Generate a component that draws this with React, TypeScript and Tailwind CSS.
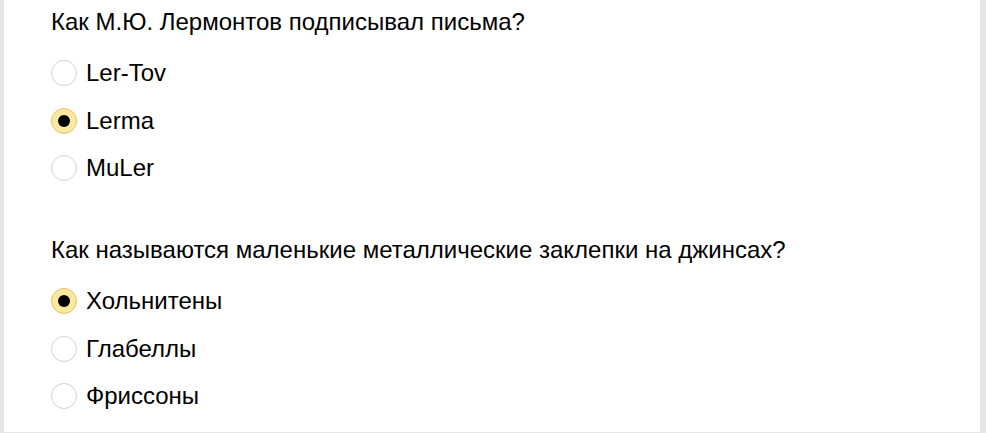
import { useState } from "react";

interface Question {
  id: string;
  title: string;
  options: string[];
  selected: number;
}

const QUESTIONS: Question[] = [
  {
    id: "q1",
    title: "Как М.Ю. Лермонтов подписывал письма?",
    options: ["Ler-Tov", "Lerma", "MuLer"],
    selected: 1,
  },
  {
    id: "q2",
    title: "Как называются маленькие металлические заклепки на джинсах?",
    options: ["Хольнитены", "Глабеллы", "Фриссоны"],
    selected: 0,
  },
];

function Radio({ checked }: { checked: boolean }) {
  return (
    <span
      className={
        checked
          ? "flex h-[26px] w-[26px] shrink-0 items-center justify-center rounded-full border border-[#e3c46b] bg-[#fde8a0]"
          : "flex h-[26px] w-[26px] shrink-0 items-center justify-center rounded-full border border-[#d2d2d2] bg-white"
      }
    >
      {checked && <span className="h-[12px] w-[12px] rounded-full bg-black" />}
    </span>
  );
}

export default function App() {
  const [answers, setAnswers] = useState<Record<string, number>>(
    Object.fromEntries(QUESTIONS.map((q) => [q.id, q.selected]))
  );

  return (
    <div className="h-[433px] overflow-hidden bg-[#e6e6e6] pl-[4px] pr-[6px] pb-[1px] font-['Liberation_Sans',Arial,sans-serif] text-black">
      <div className="h-full bg-white pl-[47px] pt-[8px]">
        {QUESTIONS.map((q) => (
          <div key={q.id} className="mb-[55px]">
            <h3 className="text-[24px] leading-[28px]">{q.title}</h3>
            <div className="mt-[24px] flex flex-col gap-[21.5px]">
              {q.options.map((opt, i) => (
                <label
                  key={opt}
                  className="flex h-[26px] cursor-pointer items-center gap-[9px]"
                  onClick={() => setAnswers({ ...answers, [q.id]: i })}
                >
                  <Radio checked={answers[q.id] === i} />
                  <span className="text-[24px] leading-[28px]">{opt}</span>
                </label>
              ))}
            </div>
          </div>
        ))}
      </div>
    </div>
  );
}
